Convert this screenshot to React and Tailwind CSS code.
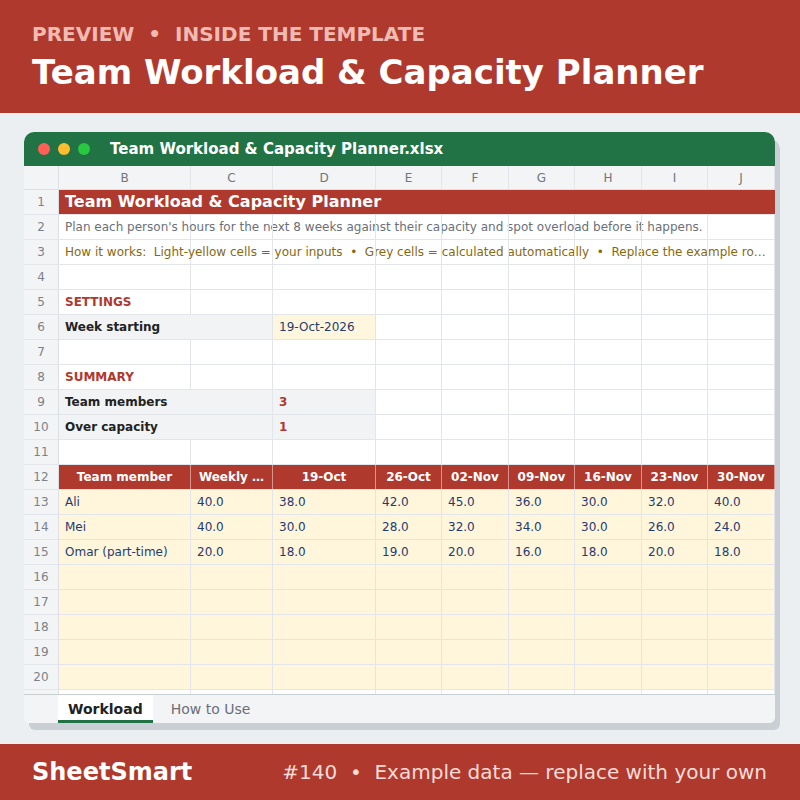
import React from 'react';

// shared column template: row numbers + B..J
const COLS = 'grid grid-cols-[35px_132px_82px_103px_66px_67px_66px_67px_66px_67px]';

const weeks = ['19-Oct', '26-Oct', '02-Nov', '09-Nov', '16-Nov', '23-Nov', '30-Nov'];

const people = [
  { name: 'Ali', cap: '40.0', hours: ['38.0', '42.0', '45.0', '36.0', '30.0', '32.0', '40.0'] },
  { name: 'Mei', cap: '40.0', hours: ['30.0', '28.0', '32.0', '34.0', '30.0', '26.0', '24.0'] },
  { name: 'Omar (part-time)', cap: '20.0', hours: ['18.0', '19.0', '20.0', '16.0', '18.0', '20.0', '18.0'] },
];

const RowNum = ({ n }) => (
  <div className="flex items-center justify-center bg-[#f3f4f6] border-r border-[#dcdfe3] text-[12px] text-[#7c828a]">
    {n}
  </div>
);

const Cell = ({ className = '', children }) => (
  <div className={`flex items-center px-[6px] border-r border-[#e2e5e9] text-[12px] whitespace-nowrap ${className}`}>
    {children}
  </div>
);

const Row = ({ n, children, className = 'bg-white' }) => (
  <div className={`${COLS} h-[25px] border-b border-[#e2e5e9] ${className}`}>
    <RowNum n={n} />
    {children}
  </div>
);

const Blank = ({ count, className = '' }) =>
  Array.from({ length: count }).map((_, i) => <Cell key={i} className={className} />);

export default function App() {
  return (
    <div className="w-[800px] h-[800px] flex flex-col bg-[#eceff1] font-['DejaVu_Sans',sans-serif]">
      {/* Top banner */}
      <header className="h-[113px] shrink-0 bg-[#b0392e] px-8 pt-[22px]">
        <div className="text-[20px] leading-[24px] font-bold text-[#f1bab3]">PREVIEW&nbsp; •&nbsp; INSIDE THE TEMPLATE</div>
        <div className="mt-[6px] text-[34px] leading-[40px] font-bold text-white">Team Workload &amp; Capacity Planner</div>
      </header>

      <main className="flex-1 px-6 pt-[19px]">
        <div className="w-[751px] rounded-t-[10px] rounded-b-[6px] overflow-hidden bg-white shadow-[5px_7px_0_#c9cfd5]">
          {/* Window title bar */}
          <div className="h-[34px] bg-[#217346] flex items-center pl-[14px]">
            <div className="flex gap-[8px]">
              <span className="w-3 h-3 rounded-full bg-[#ff5f57]" />
              <span className="w-3 h-3 rounded-full bg-[#febc2e]" />
              <span className="w-3 h-3 rounded-full bg-[#28c840]" />
            </div>
            <div className="ml-[20px] text-[15px] font-bold text-white">Team Workload &amp; Capacity Planner.xlsx</div>
          </div>

          {/* Column letters */}
          <div className={`${COLS} h-[24px] bg-[#f3f4f6] border-b border-[#dcdfe3]`}>
            <div className="border-r border-[#dcdfe3]" />
            {['B', 'C', 'D', 'E', 'F', 'G', 'H', 'I', 'J'].map((c) => (
              <div key={c} className="flex items-center justify-center border-r border-[#e2e5e9] text-[12px] text-[#70767e]">
                {c}
              </div>
            ))}
          </div>

          <Row n={1}>
            <div className="col-span-9 flex items-center px-[6px] bg-[#b0392e] text-[16px] font-bold text-white">
              Team Workload &amp; Capacity Planner
            </div>
          </Row>
          <Row n={2}>
            <Cell className="text-[#6b7078]">
              <div className="w-[703px] shrink-0 truncate">
                Plan each person's hours for the next 8 weeks against their capacity and spot overload before it happens.
              </div>
            </Cell>
            <Blank count={8} />
          </Row>
          <Row n={3}>
            <Cell className="text-[#86690f]">
              <div className="w-[703px] shrink-0 truncate whitespace-pre">
                {'How it works:  Light-yellow cells = your inputs  •  Grey cells = calculated automatically  •  Replace the example rows with your own team'}
              </div>
            </Cell>
            <Blank count={8} />
          </Row>
          <Row n={4}>
            <Blank count={9} />
          </Row>
          <Row n={5}>
            <Cell className="font-bold text-[#b0392e]">SETTINGS</Cell>
            <Blank count={8} />
          </Row>
          <Row n={6}>
            <Cell className="col-span-2 bg-[#f1f3f5] font-bold text-[#222]">Week starting</Cell>
            <Cell className="bg-[#fff7dd] text-[#1f3b70]">19-Oct-2026</Cell>
            <Blank count={6} />
          </Row>
          <Row n={7}>
            <Blank count={9} />
          </Row>
          <Row n={8}>
            <Cell className="font-bold text-[#b0392e]">SUMMARY</Cell>
            <Blank count={8} />
          </Row>
          <Row n={9}>
            <Cell className="col-span-2 bg-[#f1f3f5] font-bold text-[#222]">Team members</Cell>
            <Cell className="bg-[#f1f3f5] font-bold text-[#b0392e]">3</Cell>
            <Blank count={6} />
          </Row>
          <Row n={10}>
            <Cell className="col-span-2 bg-[#f1f3f5] font-bold text-[#222]">Over capacity</Cell>
            <Cell className="bg-[#f1f3f5] font-bold text-[#b0392e]">1</Cell>
            <Blank count={6} />
          </Row>
          <Row n={11}>
            <Blank count={9} />
          </Row>

          {/* Workload table */}
          <Row n={12}>
            {['Team member', 'Weekly …', ...weeks].map((h) => (
              <div key={h} className="flex items-center justify-center bg-[#b0392e] border-r border-[#d9938c] text-[12px] font-bold text-white">
                {h}
              </div>
            ))}
          </Row>
          {people.map((p, i) => (
            <Row key={p.name} n={13 + i} className="bg-[#fff6dc]">
              <Cell className="text-[#1f3b70]">{p.name}</Cell>
              <Cell className="text-[#1f3b70]">{p.cap}</Cell>
              {p.hours.map((h, j) => (
                <Cell key={j} className="text-[#1f3b70]">{h}</Cell>
              ))}
            </Row>
          ))}
          {[16, 17, 18, 19, 20].map((n) => (
            <Row key={n} n={n} className="bg-[#fff6dc]">
              <Blank count={9} />
            </Row>
          ))}
          <div className={`${COLS} h-[4px] bg-white`}>
            <div className="bg-[#f3f4f6] border-r border-[#dcdfe3]" />
            <Blank count={9} />
          </div>

          {/* Sheet tabs */}
          <div className="h-[29px] flex items-end gap-[8px] pl-[34px] bg-[#f2f4f6] border-t border-[#c9ced3]">
            <div className="h-[28px] flex items-center px-[10px] pt-[3px] bg-white border-b-[3px] border-[#217346] text-[14px] font-bold text-[#222]">
              Workload
            </div>
            <div className="h-[28px] flex items-center px-[10px] pt-[3px] border-b-[3px] border-transparent text-[14px] text-[#6b6f75]">
              How to Use
            </div>
          </div>
        </div>
      </main>

      {/* Bottom banner */}
      <footer className="h-[56px] shrink-0 bg-[#b0392e] flex items-center justify-between pl-8 pr-[33px]">
        <div className="text-[24px] font-bold text-white">SheetSmart</div>
        <div className="text-[20px] text-[#f6dcd8]">#140&nbsp; •&nbsp; Example data — replace with your own</div>
      </footer>
    </div>
  );
}
